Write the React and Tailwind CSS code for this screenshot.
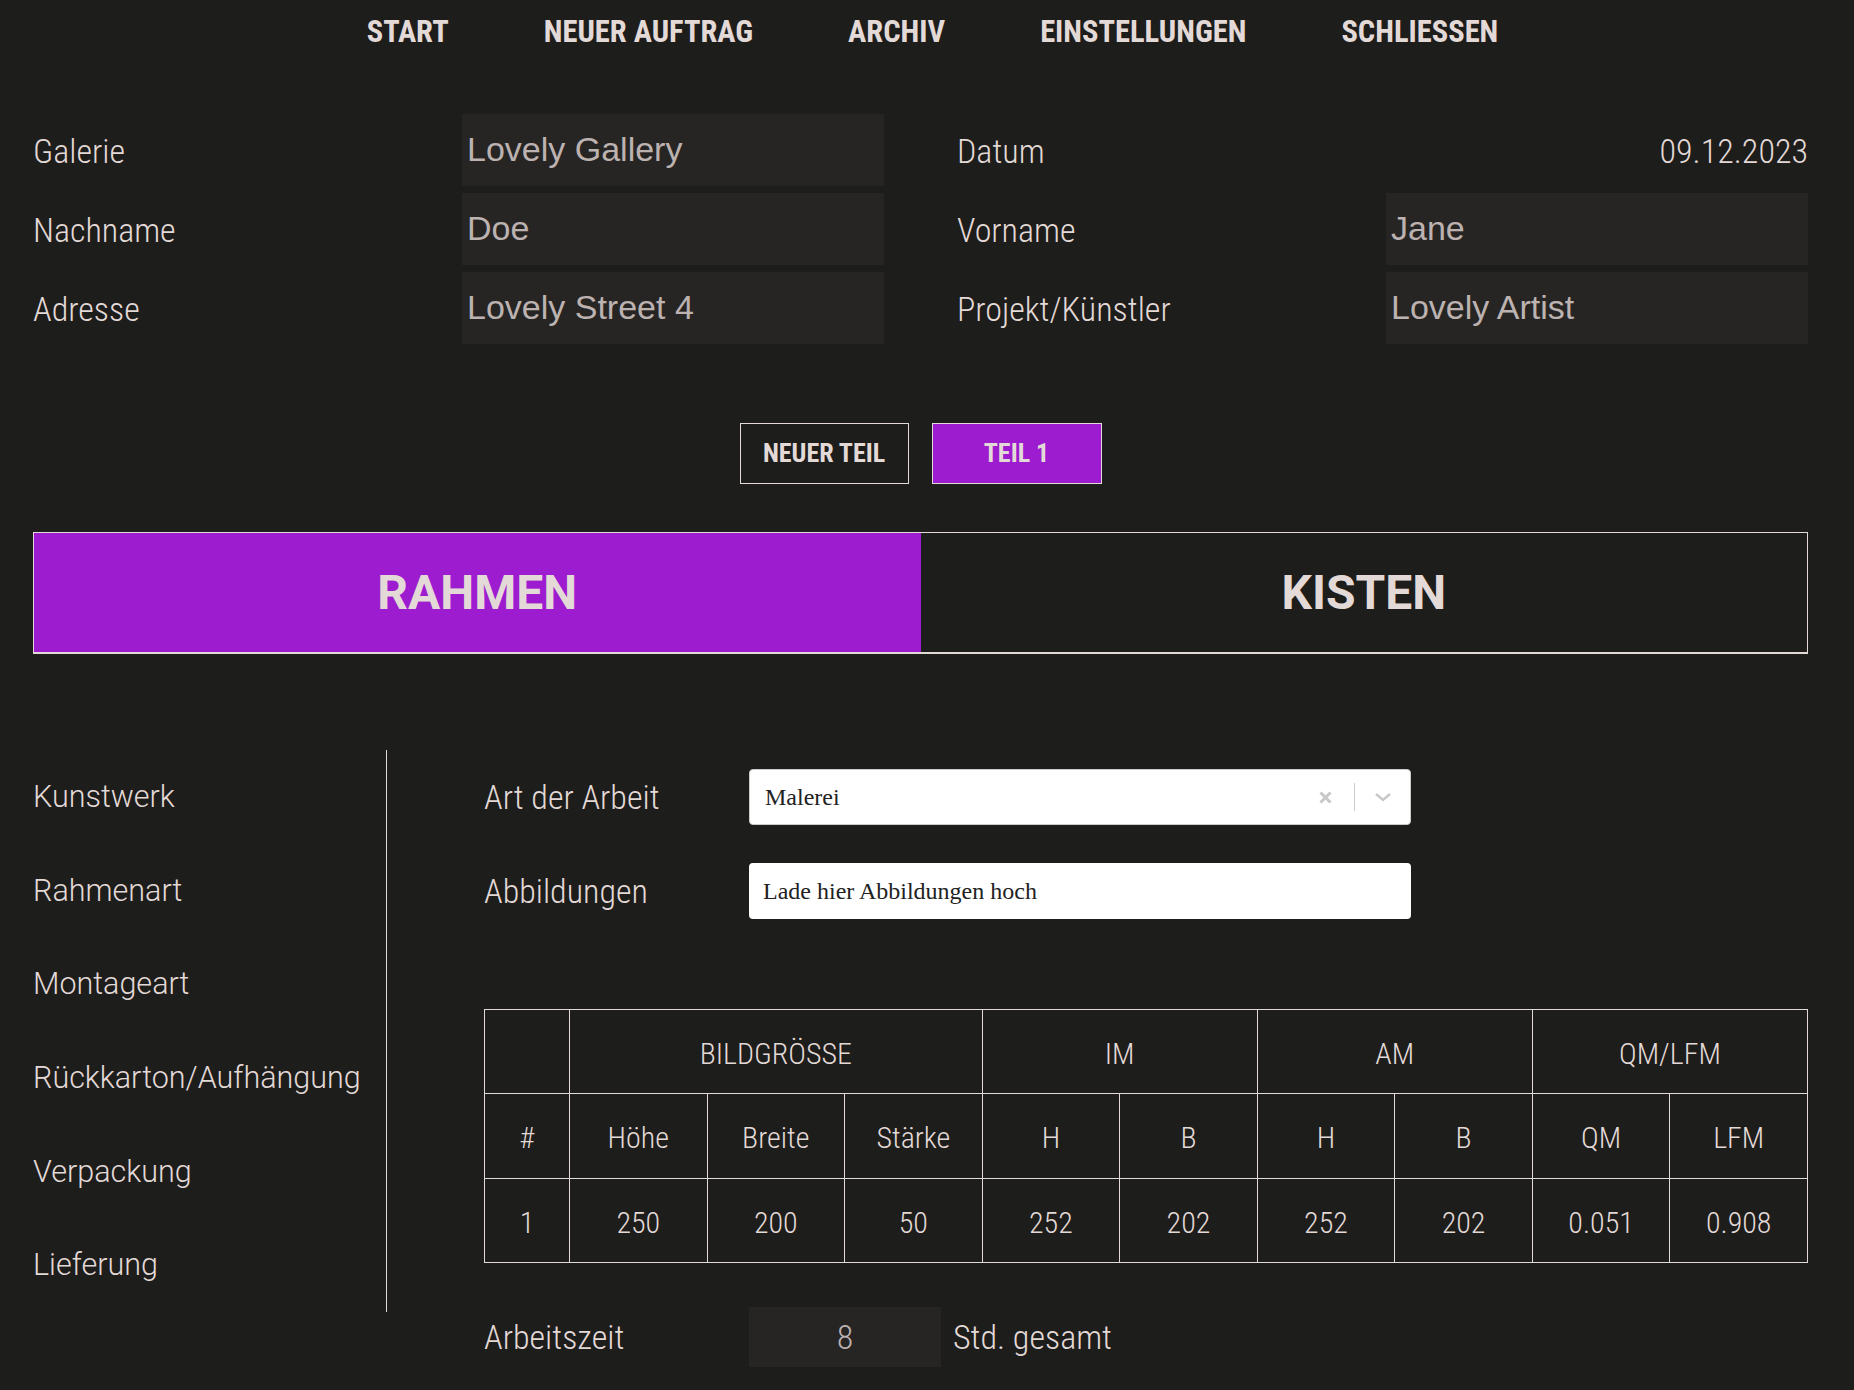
import React from "react";

// schmale Schrift für Navigation, Labels und Tabelle
const cond = "font-['Roboto_Condensed',Roboto,sans-serif] [font-stretch:condensed]";

const navItems = ["START", "NEUER AUFTRAG", "ARCHIV", "EINSTELLUNGEN", "SCHLIESSEN"];

const kopfdaten = [
  { label: "Galerie", wert: "Lovely Gallery" },
  { label: "Datum", datum: "09.12.2023" },
  { label: "Nachname", wert: "Doe" },
  { label: "Vorname", wert: "Jane" },
  { label: "Adresse", wert: "Lovely Street 4" },
  { label: "Projekt/Künstler", wert: "Lovely Artist" },
];

const seiten = ["Kunstwerk", "Rahmenart", "Montageart", "Rückkarton/Aufhängung", "Verpackung", "Lieferung"];

const spalten = ["#", "Höhe", "Breite", "Stärke", "H", "B", "H", "B", "QM", "LFM"];
const werte = ["1", "250", "200", "50", "252", "202", "252", "202", "0.051", "0.908"];

export default function App() {
  return (
    <main className="min-h-screen bg-[#1d1d1b] text-[#e3d9d7] pl-[33px] pr-[46px] font-['Roboto',sans-serif]">
      {/* Navigation */}
      <nav className={`${cond} h-16 pl-[24px] flex items-center justify-center gap-[95px] text-[30.5px] font-bold`}>
        {navItems.map((n) => (
          <a key={n} className="cursor-pointer">{n}</a>
        ))}
      </nav>

      {/* Kopfdaten */}
      <section className="mt-[50px] grid grid-cols-2 gap-x-[73px] gap-y-[7px]">
        {kopfdaten.map((k) => (
          <div key={k.label} className="flex items-center justify-between h-[72px]">
            <span className={`${cond} text-[34px] font-light pt-[2px]`}>{k.label}</span>
            {k.datum ? (
              <span className={`${cond} text-[34px] font-light pt-[2px]`}>{k.datum}</span>
            ) : (
              <div className="w-[422px] h-full bg-[#272524] px-[5px] pb-[2px] flex items-center font-['Liberation_Sans',Arial,sans-serif] text-[34px] text-[#bcb2b0]">
                {k.wert}
              </div>
            )}
          </div>
        ))}
      </section>

      {/* Teile */}
      <div className={`${cond} mt-[79px] flex justify-center gap-[23px] text-[26px] font-bold`}>
        <button className="w-[169px] h-[61px] border border-[#e3d9d7]">NEUER TEIL</button>
        <button className="w-[170px] h-[61px] border border-[#e3d9d7] bg-[#9d1ccf]">TEIL 1</button>
      </div>

      {/* Tabs */}
      <div className="mt-[48px] flex h-[122px] border border-b-2 border-[#e3d9d7] text-[48px] font-bold">
        <div className="flex-1 flex items-center justify-center bg-[#9d1ccf]">RAHMEN</div>
        <div className="flex-1 flex items-center justify-center">KISTEN</div>
      </div>

      {/* Unterer Bereich */}
      <section className="mt-[96px] flex">
        <aside className="w-[354px] h-[562px] border-r border-[#e3d9d7] flex flex-col">
          {seiten.map((s) => (
            <div key={s} className="flex-1 flex items-center text-[30.5px] font-light">{s}</div>
          ))}
        </aside>

        <div className="flex-1 pl-[97px]">
          <div className="h-[94px] flex items-center">
            <span className={`${cond} w-[265px] text-[34px] font-light`}>Art der Arbeit</span>
            <div className="w-[662px] h-[56px] bg-white rounded border border-[#cccccc] flex items-center font-['Liberation_Serif',serif] text-[24px] text-[#222]">
              <span className="flex-1 pl-[15px]">Malerei</span>
              <svg width="13" height="13" viewBox="0 0 13 13" className="mr-[22px]">
                <path d="M1.5 1.5 L11.5 11.5 M11.5 1.5 L1.5 11.5" stroke="#c8c8c8" strokeWidth="3" />
              </svg>
              <span className="w-px h-[28px] bg-[#cccccc]" />
              <svg width="18" height="18" viewBox="0 0 18 18" className="ml-[19px] mr-[18px]">
                <path d="M2 6 L9 12 L16 6" stroke="#c8c8c8" strokeWidth="2.4" fill="none" />
              </svg>
            </div>
          </div>
          <div className="h-[94px] flex items-center">
            <span className={`${cond} w-[265px] text-[34px] font-light`}>Abbildungen</span>
            <div className="w-[662px] h-[56px] bg-white rounded flex items-center pl-[14px] font-['Liberation_Serif',serif] text-[24px] text-[#222]">
              Lade hier Abbildungen hoch
            </div>
          </div>

          <table className={`${cond} mt-[71px] w-full table-fixed border-collapse text-[30px] font-light text-center`}>
            <colgroup>
              <col className="w-[85px]" />
              {spalten.slice(1).map((_, i) => (
                <col key={i} />
              ))}
            </colgroup>
            <thead>
              <tr className="h-[84px]">
                <th className="border border-[#e3d9d7] font-light" />
                <th colSpan={3} className="border border-[#e3d9d7] font-light pt-[3px]">BILDGRÖSSE</th>
                <th colSpan={2} className="border border-[#e3d9d7] font-light pt-[3px]">IM</th>
                <th colSpan={2} className="border border-[#e3d9d7] font-light pt-[3px]">AM</th>
                <th colSpan={2} className="border border-[#e3d9d7] font-light pt-[3px]">QM/LFM</th>
              </tr>
              <tr className="h-[85px]">
                {spalten.map((s, i) => (
                  <th key={i} className="border border-[#e3d9d7] font-light pt-[3px]">{s}</th>
                ))}
              </tr>
            </thead>
            <tbody>
              <tr className="h-[84px]">
                {werte.map((w, i) => (
                  <td key={i} className="border border-[#e3d9d7] pt-[3px]">{w}</td>
                ))}
              </tr>
            </tbody>
          </table>

          <div className="mt-[44px] flex items-center">
            <span className={`${cond} w-[265px] text-[34px] font-light`}>Arbeitszeit</span>
            <div className={`${cond} w-[192px] h-[60px] bg-[#272524] flex items-center justify-center text-[34px] font-light text-[#bcb2b0]`}>
              8
            </div>
            <span className={`${cond} ml-[12px] text-[34px] font-light`}>Std. gesamt</span>
          </div>
        </div>
      </section>
    </main>
  );
}
